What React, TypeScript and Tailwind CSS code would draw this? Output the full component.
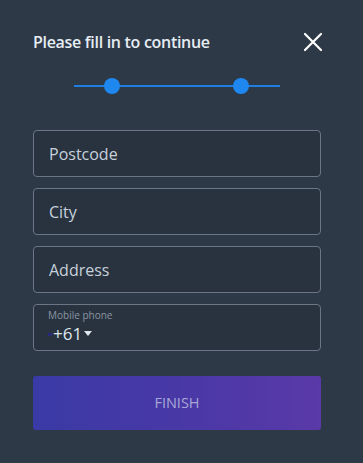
export default function App() {
  const font = { fontFamily: '"Open Sans", "Noto Sans", sans-serif' };
  return (
    <div className="w-[363px] h-[463px] bg-[#2e3947] pl-[33px] pr-[42px] pt-[31px]" style={font}>
      <div className="flex items-center justify-between h-[22px]">
        <h1 className="text-[16px] font-semibold text-[#e6edf3] tracking-[-0.3px]">Please fill in to continue</h1>
        <svg width="20" height="20" viewBox="0 0 20 20" className="mr-[-2px]">
          <path d="M2 2L18 18M18 2L2 18" stroke="#ffffff" strokeWidth="2.2" strokeLinecap="round" />
        </svg>
      </div>
      <div className="relative h-[16px] mt-[25px] ml-[41px] w-[206px]">
        <div className="absolute left-0 right-0 top-[7px] h-[2px] bg-[#1e7fe0]" />
        <div className="absolute left-[30px] top-0 w-[16px] h-[16px] rounded-full bg-[#1e88f0]" />
        <div className="absolute left-[159px] top-0 w-[16px] h-[16px] rounded-full bg-[#1e88f0]" />
      </div>
      <div className="flex flex-col gap-[11px] mt-[36px]">
        {["Postcode", "City", "Address"].map((t) => (
          <div key={t} className="h-[47px] rounded-[4px] border border-[#6a7585] bg-[#29333f] flex items-center px-[15px] text-[16px] text-[#c6d1db]">
            {t}
          </div>
        ))}
        <div className="h-[47px] rounded-[4px] border border-[#6a7585] bg-[#29333f] flex flex-col justify-center px-[14px]">
          <span className="text-[10px] leading-[11px] text-[#8a95a3] mt-[-2px]">Mobile phone</span>
          <div className="flex items-center text-[#dfe6ec] h-[20px] mt-[3px]">
            <span className="w-[4px] h-[3px] bg-[#2a2a7a] mr-[1px] mt-[1px]" />
            <span className="text-[17px] leading-[20px]">+61</span>
            <svg width="8" height="5" viewBox="0 0 8 5" className="ml-[2px]">
              <path d="M0 0H8L4 5Z" fill="#dfe6ec" />
            </svg>
          </div>
        </div>
      </div>
      <button className="mt-[25px] w-full h-[54px] rounded-[3px] bg-gradient-to-r from-[#3a3aa6] via-[#4838a6] to-[#5a39a8] text-[14.5px] text-[#a8a8d8]">
        FINISH
      </button>
    </div>
  );
}
